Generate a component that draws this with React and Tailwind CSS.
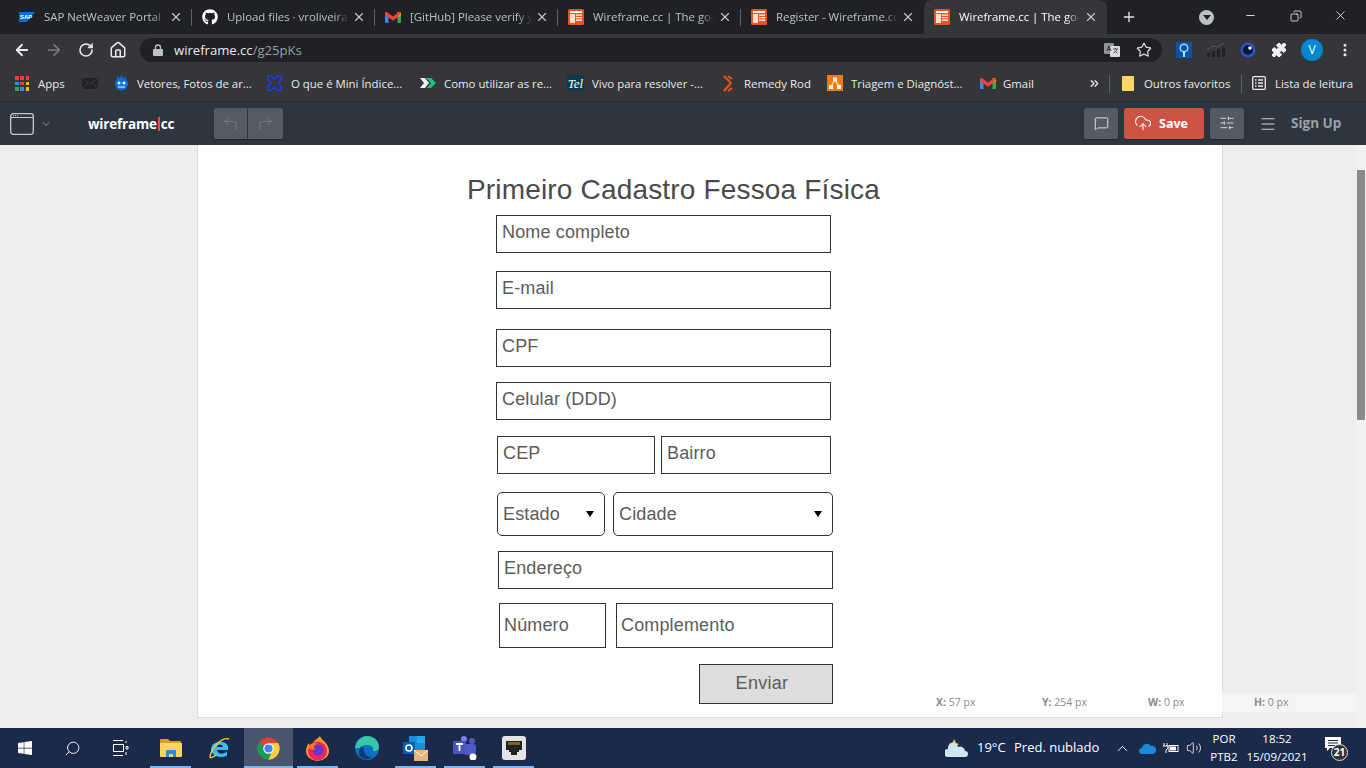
import React from "react";
import { ArrowLeft, ArrowRight, RotateCw, House, Star, Puzzle, MessageSquare, CloudUpload, SlidersHorizontal, Menu, ChevronDown, CornerUpLeft, CornerUpRight, X, Plus, Minus, ChevronUp, Volume2, Search, MoreVertical, ChevronsRight, Copy } from "lucide-react";
import { FaGithub, FaWindows } from "react-icons/fa";

const Wf = () => (
  <svg width="16" height="16" viewBox="0 0 16 16"><rect width="16" height="16" rx="1.5" fill="#e8541e"/><rect x="2" y="2" width="12" height="2" fill="#fff"/><rect x="2" y="5" width="5" height="9" fill="#fde0cf"/><rect x="8" y="5.5" width="6" height="1.3" fill="#fff"/><rect x="8" y="8" width="6" height="1.3" fill="#fff"/><rect x="8" y="10.5" width="6" height="1.3" fill="#fff"/></svg>
);
const Gm = () => (
  <svg width="16" height="12" viewBox="0 0 16 12"><path d="M0 2v9a1 1 0 0 0 1 1h2.500V5z" fill="#4285f4"/><path d="M16 2v9a1 1 0 0 1-1 1h-2.500V5z" fill="#34a853"/><path d="M12.500 1 16 1.500V4l-3.500 2.500z" fill="#fbbc04"/><path d="M3.500 6.500 0 4V2a1.300 1.300 0 0 1 2-1l6 4.500L14 1a1.300 1.300 0 0 1 2 1l-3.500 4.500L8 9.800z" fill="#ea4335"/></svg>
);
const Sap = () => (
  <svg width="16" height="10" viewBox="0 0 16 10"><path d="M0 0h16L8 10H0z" fill="#0a6ed1"/><text x="1" y="7" fontSize="6" fontWeight="700" fill="#fff" fontFamily="Liberation Sans, sans-serif">SAP</text></svg>
);

const tabs = [
  { icon: <Sap />, t: "SAP NetWeaver Portal" },
  { icon: <FaGithub size={16} color="#fff" />, t: "Upload files · vroliveira" },
  { icon: <Gm />, t: "[GitHub] Please verify y" },
  { icon: <Wf />, t: "Wireframe.cc | The go-" },
  { icon: <Wf />, t: "Register - Wireframe.cc" },
  { icon: <Wf />, t: "Wireframe.cc | The go-", active: true },
];

function Tab({ icon, t, active, sep }) {
  return (
    <div className={`relative flex h-[34px] w-[183px] shrink-0 items-center pl-[10px] ${active ? "rounded-t-lg bg-[#35363a] text-white" : "text-[#bdc1c6]"}`}>
      <div className="flex w-4 shrink-0 items-center justify-center">{icon}</div>
      <div className="ml-[9px] w-[122px] overflow-hidden whitespace-nowrap text-[11.4px] [mask-image:linear-gradient(to_right,black_88%,transparent)]">{t}</div>
      <X size={14} strokeWidth={2} className="ml-[3px] shrink-0 text-[#c4c7ca]" />
      {sep && <div className="absolute right-0 top-[9px] h-[17px] w-px bg-[#5f6368]" />}
    </div>
  );
}

function TabStrip() {
  return (
    <div className="flex h-[34px] shrink-0 items-end bg-[#202124] pl-[9px]">
      {tabs.map((x, i) => <Tab key={i} {...x} sep={i < 4} />)}
      <Plus size={16} strokeWidth={2} className="mb-[9px] ml-[14px] shrink-0 text-[#dee1e6]" />
      <div className="mb-[9px] ml-[62px] flex h-[15px] w-[15px] shrink-0 items-center justify-center rounded-full bg-[#bdc1c6]">
        <div className="h-0 w-0 border-x-[4px] border-t-[5px] border-x-transparent border-t-[#202124]" />
      </div>
      <Minus size={13} strokeWidth={1.5} className="mb-[12px] ml-[30px] shrink-0 text-white" />
      <Copy size={12} strokeWidth={1.5} className="mb-[12px] ml-[33px] shrink-0 -scale-x-100 text-white" />
      <X size={15} strokeWidth={1.2} className="mb-[11px] ml-[31px] shrink-0 text-white" />
    </div>
  );
}

function AddressBar() {
  return (
    <div className="flex h-[32px] shrink-0 items-center bg-[#35363a] text-white">
      <ArrowLeft size={18} strokeWidth={2.4} className="ml-[13px] shrink-0 text-[#e8eaed]" />
      <ArrowRight size={18} strokeWidth={2.2} className="ml-[14px] shrink-0 text-[#7b7d80]" />
      <RotateCw size={16} strokeWidth={2.4} className="ml-[15px] shrink-0 text-[#e8eaed]" />
      <House size={18} strokeWidth={2} className="ml-[15px] shrink-0 text-[#e8eaed]" />
      <div className="ml-[13px] flex h-[24px] w-[1022px] shrink-0 items-center rounded-full bg-[#202124]">
        <svg className="ml-[13px]" width="10" height="12" viewBox="0 0 10 12" fill="#bdc1c6"><path d="M1 5h8a1 1 0 0 1 1 1v5a1 1 0 0 1-1 1H1a1 1 0 0 1-1-1V6a1 1 0 0 1 1-1z"/><path d="M2.500 5V3.500a2.500 2.500 0 0 1 5 0V5" fill="none" stroke="#bdc1c6" strokeWidth="1.300"/></svg>
        <div className="ml-[11px] translate-y-[1px] text-[13.1px] text-[#e8eaed]">wireframe.cc<span className="text-[#9aa0a6]">/g25pKs</span></div>
        <div className="ml-auto mr-[10px] flex items-center gap-[16px]">
          <svg width="16" height="16" viewBox="0 0 16 16"><rect x="0" y="1" width="10" height="11" rx="1" fill="#8f9296"/><rect x="6" y="4" width="10" height="11" rx="1" fill="#d8dadc"/><path d="M3 9l2-5 2 5M3.800 7.500h2.500" stroke="#333" fill="none" strokeWidth="1"/><path d="M9 7h5M11.500 6v1M13 7c-.5 2-2 3.500-3.500 4M10.500 8.500c.8 1.200 1.800 2 3 2.500" stroke="#444" fill="none" strokeWidth=".9"/></svg>
          <Star size={16} strokeWidth={1.8} className="text-[#dadce0]" />
        </div>
      </div>
      <div className="ml-[14px] flex h-[16px] w-[16px] shrink-0 items-center justify-center bg-[#0a55a3]">
        <svg width="12" height="15" viewBox="0 0 12 15"><circle cx="6" cy="5" r="3.800" fill="none" stroke="#9fd3f0" strokeWidth="1.500"/><path d="M6 9v5" stroke="#fff" strokeWidth="1.500"/></svg>
      </div>
      <svg className="ml-[15px] shrink-0" width="18" height="14" viewBox="0 0 18 14"><rect x="0" y="10" width="3" height="4" fill="#202124"/><rect x="5" y="8" width="3" height="6" fill="#202124"/><rect x="10" y="6" width="3" height="8" fill="#202124"/><rect x="15" y="4" width="3" height="10" fill="#202124"/><path d="M0 7 6 3l4 1 7-4" stroke="#55585c" fill="none" strokeWidth="1"/></svg>
      <svg className="ml-[15px] shrink-0" width="16" height="16" viewBox="0 0 16 16"><circle cx="8" cy="8" r="7.500" fill="#2f55c4"/><circle cx="8" cy="8" r="5" fill="#0a1640"/><circle cx="10" cy="6" r="1.800" fill="#fff"/></svg>
      <Puzzle size={16} fill="#f1f3f4" strokeWidth={1.5} className="ml-[15px] shrink-0 text-[#f1f3f4]" />
      <div className="ml-[14px] flex h-[22px] w-[22px] shrink-0 items-center justify-center rounded-full bg-[#0288d1] text-[12px] text-white">V</div>
      <MoreVertical size={16} strokeWidth={2.6} className="ml-[14px] shrink-0 text-[#e8eaed]" />
    </div>
  );
}

const B = ({ w, icon, children, gap = 8 }) => (
  <div className="flex shrink-0 items-center" style={{ width: w }}>
    <div className="flex shrink-0 items-center justify-center" style={{ marginRight: gap }}>{icon}</div>
    {children && <span className="whitespace-nowrap">{children}</span>}
  </div>
);

function AppsIcon() {
  const c = ["#ea4335","#ea4335","#ea4335","#4285f4","#ea4335","#fbbc04","#34a853","#4285f4","#fbbc04"];
  return <div className="grid w-[14px] grid-cols-3 gap-[2px]">{c.map((x, i) => <div key={i} className="h-[3.500px] w-[3.500px]" style={{ background: x }} />)}</div>;
}

function Bookmarks() {
  return (
    <div className="flex h-[36px] shrink-0 items-center border-b border-[#2a2b2e] bg-[#35363a] pl-[15px] text-[11.4px] text-[#e8eaed]">
      <B w={67} gap={9} icon={<AppsIcon />}>Apps</B>
      <B w={32} gap={0} icon={<svg width="16" height="11" viewBox="0 0 16 11"><rect width="16" height="11" rx="1" fill="#202124"/><path d="M0 0l8 6 8-6M0 11l6-6M16 11l-6-6" stroke="#3a3b3e" fill="none"/></svg>} />
      <B w={153} gap={8} icon={<svg width="15" height="16" viewBox="0 0 15 16"><circle cx="7.500" cy="9" r="6.500" fill="#0a6fd8"/><path d="M7.500 0v3M3 2l1.500 2M12 2l-1.500 2" stroke="#0a6fd8" strokeWidth="1.500"/><circle cx="5" cy="8" r="1.500" fill="#fff"/><circle cx="10" cy="8" r="1.500" fill="#fff"/><path d="M4 12h7" stroke="#fff"/></svg>}>Vetores, Fotos de ar...</B>
      <B w={153} gap={9} icon={<svg width="15" height="16" viewBox="0 0 15 16" fill="none" stroke="#1a3fe0" strokeWidth="1.600"><path d="M1 1h4l2.500 3L10 1h4v4l-3 3 3 3v4h-4l-2.500-3L5 15H1v-4l3-3-3-3z"/></svg>}>O que é Mini Índice...</B>
      <B w={147} gap={8} icon={<svg width="16" height="12" viewBox="0 0 16 12"><path d="M0 1h5l4 5-4 5H0l4-5z" fill="#f1f3f4"/><path d="M6 1h5l5 5-5 5H7l4-5z" fill="#19c37d"/></svg>}>Como utilizar as re...</B>
      <B w={155} gap={8} icon={<div className="flex h-[16px] w-[17px] items-center justify-center bg-[#0c3a4a] font-['Liberation_Serif',serif] text-[13px] italic leading-none text-white">Tel</div>}>Vivo para resolver -...</B>
      <B w={105} gap={10} icon={<svg width="12" height="17" viewBox="0 0 12 17" fill="none" stroke="#e8541e" strokeWidth="2"><path d="M2 1l7 7-7 8"/><path d="M6 1l4 3M6 16l4-3"/></svg>}>Remedy Rod</B>
      <B w={153} gap={8} icon={<svg width="16" height="16" viewBox="0 0 16 16"><rect width="16" height="16" fill="#f57c00"/><path d="M8 5 4 11M8 5l4 6" stroke="#fff"/><rect x="6" y="2.500" width="4" height="4" fill="#fff"/><rect x="2" y="10" width="4" height="4" fill="#fff"/><rect x="10" y="10" width="4" height="4" fill="#fff"/></svg>}>Triagem e Diagnóst...</B>
      <B w={108} gap={7} icon={<Gm />}>Gmail</B>
      <ChevronsRight size={13} strokeWidth={2.4} className="shrink-0 text-[#e8eaed]" />
      <div className="ml-[8px] h-[18px] w-px shrink-0 bg-[#5f6368]" />
      <B w={131} gap={10} icon={<div className="ml-[12px] h-[15px] w-[12px] rounded-[1px] bg-[#fdd663]" />}>Outros favoritos</B>
      <div className="h-[18px] w-px shrink-0 bg-[#5f6368]" />
      <B w={110} gap={9} icon={<svg className="ml-[10px]" width="14" height="14" viewBox="0 0 14 14" fill="none" stroke="#e8eaed" strokeWidth="1.300"><rect x=".7" y=".7" width="12.600" height="12.600" rx="1"/><path d="M3 4h1.500M6 4h5M3 7h1.500M6 7h5M3 10h1.500M6 10h5"/></svg>}>Lista de leitura</B>
    </div>
  );
}

const ToolBtn = ({ children }) => (
  <div className="flex h-[32px] w-[34px] items-center justify-center rounded-[3px] border-b border-[#23272e] bg-[#545b66]">{children}</div>
);

function AppBar() {
  return (
    <div className="flex h-[43px] shrink-0 items-center bg-[#2d3541]">
      <svg className="ml-[10px] shrink-0" width="24" height="22" viewBox="0 0 24 22" fill="none"><rect x=".7" y=".7" width="22.600" height="20.600" rx="2.500" stroke="#c5c8cc" strokeWidth="1.300"/><path d="M1 4.500h22" stroke="#c5c8cc"/><path d="M3 2.700h1M5 2.700h1M7 2.700h1" stroke="#c5c8cc"/></svg>
      <ChevronDown size={12} strokeWidth={1.6} className="ml-[6px] shrink-0 text-[#b0b4ba]" />
      <div className="ml-[36px] w-[86px] shrink-0 translate-y-[1px] whitespace-nowrap text-[13.5px] font-bold tracking-[-0.2px] text-white">wireframe<span className="mx-[1px] inline-block h-[14px] w-[2px] translate-y-[2px] bg-[#e0533f]" />cc</div>
      <div className="ml-[40px] flex h-[32px] w-[69px] shrink-0 rounded-[3px] border-b border-[#23272e] bg-[#545b66]">
        <div className="flex w-[34px] items-center justify-center border-r border-[#2d3541]"><CornerUpLeft size={17} strokeWidth={1.2} className="text-[#7d838c]" /></div>
        <div className="flex w-[34px] items-center justify-center"><CornerUpRight size={17} strokeWidth={1.2} className="text-[#7d838c]" /></div>
      </div>
      <div className="ml-[801px] shrink-0"><ToolBtn><MessageSquare size={15} strokeWidth={1.5} className="text-[#e5e7ea]" /></ToolBtn></div>
      <div className="ml-[6px] flex h-[32px] w-[80px] shrink-0 items-center justify-center gap-[7px] rounded-[3px] border-b border-[#23272e] bg-[#cd5345] pr-[6px] text-[12.5px] font-bold text-white"><CloudUpload size={18} strokeWidth={1.4} /><span className="translate-y-[1px]">Save</span></div>
      <div className="ml-[6px] shrink-0"><ToolBtn><SlidersHorizontal size={16} strokeWidth={1.3} className="text-[#e5e7ea]" /></ToolBtn></div>
      <Menu size={18} strokeWidth={1.4} className="ml-[15px] shrink-0 text-[#d0d3d7]" />
      <div className="ml-[14px] whitespace-nowrap text-[13.5px] font-bold text-[#9aa0a8]">Sign Up</div>
    </div>
  );
}

const Field = ({ w, h = 38, ml = 0, pl = 5, dy = -2, select, rounded, children }) => (
  <div className={`flex shrink-0 items-center border border-[#333] bg-white text-[18px] leading-none tracking-[0.15px] text-[#5c5c5c] ${rounded ? "rounded-[5px]" : ""}`} style={{ width: w, height: h, marginLeft: ml, paddingLeft: pl }}>
    <span style={{ transform: `translateY(${dy}px)` }}>{children}</span>
    {select && <div className="ml-auto mr-[10px] h-0 w-0 border-x-[4px] border-t-[6px] border-x-transparent border-t-black" />}
  </div>
);

function Form() {
  return (
    <div className="flex h-[573px] w-[1026px] flex-col border-x border-b border-[#dcdcdc] bg-white font-['Liberation_Sans',Arial,sans-serif]">
      <div className="ml-[269px] mt-[29px] h-[32px] whitespace-nowrap text-[28px] leading-[32px] tracking-[0.17px] text-[#4a4a4a]">Primeiro Cadastro Fessoa Física</div>
      <div className="ml-[298px] mt-[9px]"><Field w={335}>Nome completo</Field></div>
      <div className="ml-[298px] mt-[18px]"><Field w={335}>E-mail</Field></div>
      <div className="ml-[298px] mt-[20px]"><Field w={335}>CPF</Field></div>
      <div className="ml-[298px] mt-[15px]"><Field w={335}>Celular (DDD)</Field></div>
      <div className="ml-[299px] mt-[16px] flex"><Field w={158}>CEP</Field><Field w={170} ml={6}>Bairro</Field></div>
      <div className="ml-[299px] mt-[18px] flex"><Field w={108} h={44} dy={0} rounded select>Estado</Field><Field w={220} h={44} ml={8} dy={0} rounded select>Cidade</Field></div>
      <div className="ml-[300px] mt-[15px]"><Field w={335}>Endereço</Field></div>
      <div className="ml-[301px] mt-[14px] flex"><Field w={107} h={45} pl={4} dy={-1}>Número</Field><Field w={217} h={45} ml={10} pl={4} dy={-1}>Complemento</Field></div>
      <div className="ml-[501px] mt-[16px] flex h-[40px] w-[134px] items-center justify-center border border-[#333] bg-[#dddddd] pr-[8px] text-[18px] tracking-[0.3px] text-[#5c5c5c]"><span className="-translate-y-[1px]">Enviar</span></div>
    </div>
  );
}

function Canvas() {
  const Coord = ({ l, v, left }) => (
    <div className="absolute top-[2px] text-[10.500px] text-[#8a8a8a]" style={{ left }}><b>{l}:</b> {v} px</div>
  );
  return (
    <div className="relative flex min-h-0 flex-1 bg-[#eeeeee]">
      <div className="ml-[197px]"><Form /></div>
      <div className="absolute left-[1222px] top-[548px] h-[19px] w-[134px] bg-[#f5f5f5]" />
      <div className="absolute left-0 top-[548px] h-[19px] w-full">
        <Coord l="X" v="57" left={936} />
        <Coord l="Y" v="254" left={1042} />
        <Coord l="W" v="0" left={1148} />
        <Coord l="H" v="0" left={1254} />
      </div>
      <div className="absolute right-0 top-0 h-full w-[10px] bg-[#f1f1f1]">
        <div className="ml-[1px] mt-[25px] h-[250px] w-[8px] rounded-[1px] bg-[#8a8a8a]" />
      </div>
    </div>
  );
}

const Slot = ({ active, bar = true, children }) => (
  <div className={`relative flex h-[40px] w-[49px] shrink-0 items-center justify-center ${active ? "bg-[#4a566e]" : ""}`}>
    {children}
    {bar && <div className={`absolute bottom-0 h-[2px] bg-[#76b9ed] ${active ? "inset-x-0" : "inset-x-[4px]"}`} />}
  </div>
);

function Taskbar() {
  return (
    <div className="flex h-[40px] shrink-0 items-center bg-[#1b2a4a] text-white">
      <div className="flex w-[49px] shrink-0 justify-center"><FaWindows size={16} /></div>
      <div className="flex w-[47px] shrink-0 justify-center"><Search size={17} strokeWidth={1.3} className="-scale-x-100" /></div>
      <div className="flex w-[49px] shrink-0 justify-center">
        <svg width="16" height="16" viewBox="0 0 16 16" fill="none" stroke="#fff"><path d="M0 .5h10M0 15.500h10M.5 4.500h10v7H.5zM13 1v2M13 6.500h2v2.500h-2zM13 12v3"/></svg>
      </div>
      <div className="ml-[1px] flex shrink-0">
        <Slot><svg width="22" height="20" viewBox="0 0 22 20"><path d="M0 2a1 1 0 0 1 1-1h7l2 2h10a1 1 0 0 1 1 1v2H0z" fill="#d9a21b"/><path d="M0 5h22v13a1 1 0 0 1-1 1H1a1 1 0 0 1-1-1z" fill="#fcd462"/><path d="M6 19v-7h10v7h-3v-3H9v3z" fill="#2a8bd6"/></svg></Slot>
        <Slot bar={false}><svg width="24" height="24" viewBox="0 0 24 24"><path d="M3 13a9 7.500 0 0 1 17-3v4H9c.5 4 6 5 10 1.500v4C13 23 3 20 3 13zm6-2h6c-.5-3.500-5.500-3.500-6 0z" fill="#37c0ee"/><path d="M21 3C15 1 5 9 2 20c-1 3 4 1 6-1" stroke="#f4c430" fill="none" strokeWidth="1.400"/></svg></Slot>
        <Slot active><svg width="23" height="23" viewBox="0 0 48 48"><circle cx="24" cy="24" r="23" fill="#db4437"/><path d="M24 24 12.500 44a23 23 0 0 0 31.400-31.500H24z" fill="#0f9d58"/><path d="M24 12.500h20A23 23 0 0 1 24 47l10-23z" fill="#ffcd40"/><path d="M24 24 12.500 44A23 23 0 0 1 4 12z" fill="#0f9d58"/><circle cx="24" cy="24" r="11" fill="#fff"/><circle cx="24" cy="24" r="8.500" fill="#4285f4"/></svg></Slot>
        <Slot><svg width="23" height="25" viewBox="0 0 23 25"><path d="M14 0c1 4 9 7 9 15a11.500 10 0 0 1-23 0c0-3 1-6 3-8 0 2 1 2 2 3 1-4 5-6 9-10z" fill="#ff9a1f"/><circle cx="11.500" cy="15" r="9.500" fill="#f3235f"/><circle cx="12" cy="14" r="5.500" fill="#6b35c9"/><path d="M2 12c2-5 7-6 10-4-4 0-5 3-3 6-3 0-5-1-7-2z" fill="#ff7a1f"/></svg></Slot>
        <Slot bar={false}><svg width="24" height="24" viewBox="0 0 24 24"><circle cx="12" cy="12" r="12" fill="#0f6fc5"/><path d="M0 12C1 4 7 0 12 0c7 0 12 5 12 11 0 3-3 5-6 4 1-2 0-6-6-6-4 0-7 2-7 3z" fill="#35c6a5"/><path d="M9 14c0 4 3 7 8 7-3 3-9 3-12-1-2-3-1-8 2-9 1 0 2 1 2 3z" fill="#0b3c78"/></svg></Slot>
        <Slot><svg width="25" height="26" viewBox="0 0 25 26"><rect x="6" y="1" width="16" height="14" fill="#1490df"/><rect x="14" y="1" width="8" height="7" fill="#28a8ea"/><rect x="0" y="7" width="12" height="12" fill="#0a5fb0"/><circle cx="6" cy="13" r="3" fill="none" stroke="#fff" strokeWidth="1.600"/><rect x="11" y="15" width="14" height="11" fill="#e8b27a"/><path d="M11 15l7 6 7-6" stroke="#fff" fill="none"/></svg></Slot>
        <Slot><svg width="24" height="24" viewBox="0 0 24 24"><circle cx="19" cy="5" r="3" fill="#5059c9"/><circle cx="11" cy="3" r="3" fill="#7b83eb"/><rect x="11" y="8" width="12" height="11" rx="3" fill="#5059c9"/><rect x="0" y="5" width="13" height="13" rx="1" fill="#4b53bc"/><path d="M3 8h7M6.500 8v7" stroke="#fff" strokeWidth="1.800"/><circle cx="20" cy="21" r="3.500" fill="#fff"/></svg></Slot>
        <Slot><div className="flex h-[24px] w-[24px] items-center justify-center rounded-[3px] bg-[#e4e4e4]"><svg width="16" height="14" viewBox="0 0 16 14"><path d="M0 0h16v9h-3v2h-2v3H5v-3H3V9H0z" fill="#222"/><path d="M3 1v3M5 1v3M7 1v3M9 1v3M11 1v3M13 1v3" stroke="#d7a520"/></svg></div></Slot>
      </div>
      <svg className="ml-[407px] shrink-0" width="24" height="20" viewBox="0 0 24 20"><path d="M9 1l2 4 3 1-4 3-4 1-2-4 4-2z" fill="#fcd34d"/><path d="M3 19a4 4 0 0 1 0-8 5 5 0 0 1 10-2 5 5 0 0 1 7 4 3 3 0 0 1 0 6z" fill="#cfe6f7"/></svg>
      <div className="ml-[8px] w-[28px] shrink-0 whitespace-nowrap text-[13px]">19°C</div>
      <div className="ml-[9px] w-[86px] shrink-0 whitespace-nowrap text-[13px]">Pred. nublado</div>
      <ChevronUp size={17} strokeWidth={1.3} className="ml-[14px] shrink-0" />
      <svg className="ml-[8px] shrink-0" width="17" height="11" viewBox="0 0 17 11"><path d="M3 11a3 3 0 0 1 0-6 5 5 0 0 1 9-2 4 4 0 0 1 2 8z" fill="#1e88d8"/></svg>
      <svg className="ml-[7px] shrink-0" width="16" height="12" viewBox="0 0 16 12" fill="none" stroke="#fff"><path d="M1 1v3M4 1v3M0 4h5v2l-2 2v3"/><rect x="6" y="3.500" width="9" height="6"/><rect x="7.500" y="5" width="5" height="3" fill="#fff"/></svg>
      <Volume2 size={16} strokeWidth={1.2} className="ml-[7px] shrink-0" />
      <div className="ml-[5px] flex w-[34px] shrink-0 flex-col items-center text-[11.5px] leading-[18px]"><span>POR</span><span>PTB2</span></div>
      <div className="ml-[2px] flex w-[68px] shrink-0 flex-col items-center text-[11.5px] leading-[18px]"><span>18:52</span><span>15/09/2021</span></div>
      <div className="relative ml-[14px] h-[24px] w-[24px] shrink-0">
        <svg className="absolute left-0 top-[1px]" width="16" height="14" viewBox="0 0 16 14"><path d="M0 0h16v11H5l-3 3v-3H0z" fill="#fff"/><path d="M3 3.500h10M3 6h10M3 8.500h7" stroke="#1b2a4a"/></svg>
        <div className="absolute left-[6px] top-[8px] flex h-[17px] w-[17px] items-center justify-center rounded-full border border-[#ddd] bg-[#333] text-[10px] font-bold text-white">21</div>
      </div>
    </div>
  );
}

export default function App() {
  return (
    <div className="flex h-[768px] w-[1366px] flex-col overflow-hidden font-['Open_Sans',sans-serif]">
      <TabStrip />
      <AddressBar />
      <Bookmarks />
      <AppBar />
      <Canvas />
      <Taskbar />
    </div>
  );
}
